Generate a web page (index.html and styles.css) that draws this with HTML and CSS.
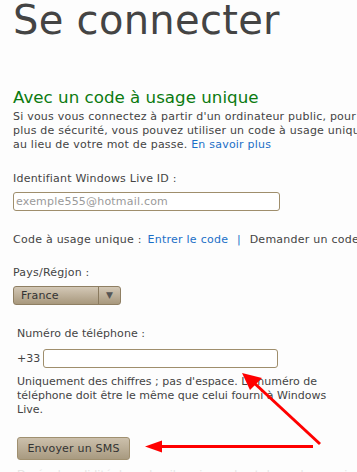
FILE: index.html
```html
<!DOCTYPE html>
<html lang="fr">
<head>
<meta charset="utf-8">
<link rel="stylesheet" href="styles.css">
</head>
<body>
<div class="page">
  <h1 class="title">Se connecter</h1>
  <h2 class="subtitle">Avec un code à usage unique</h2>
  <p class="intro">Si vous vous connectez à partir d'un ordinateur public, pour plus de sécurité, vous pouvez utiliser un code à usage unique au lieu de votre mot de passe. <a class="link" href="#">En savoir plus</a></p>

  <div class="field">
    <label class="label">Identifiant Windows Live ID :</label>
    <input class="text-input id-input" type="text" placeholder="exemple555@hotmail.com">
  </div>

  <p class="code-line">Code à usage unique : <a class="link" href="#">Entrer le code</a> <span class="sep">|</span> Demander un code</p>

  <div class="field">
    <label class="label">Pays/Régjon :</label>
    <div class="select">
      <span class="select-value">France</span>
      <span class="select-arrow">▼</span>
    </div>
  </div>

  <div class="phone-block">
    <label class="label plain">Numéro de téléphone :</label>
    <div class="phone-row">
      <span class="prefix">+33</span>
      <input class="text-input phone-input" type="text">
    </div>
    <p class="hint">Uniquement des chiffres ; pas d'espace. Le numéro de téléphone doit être le même que celui fourni à Windows Live.</p>
    <button class="btn">Envoyer un SMS</button>
    <p class="faint">Durée de validité du code : il expire au bout de quelques minutes.</p>
  </div>
</div>
<svg class="arrows" width="357" height="472" viewBox="0 0 357 472">
  <g stroke="#f00" stroke-width="3" fill="none">
    <line x1="320" y1="444" x2="252" y2="381"/>
    <line x1="313" y1="446.5" x2="158" y2="446.5"/>
  </g>
  <g fill="#f00">
    <polygon points="242,373 262,378 250,390"/>
    <polygon points="145,446.5 162,440.5 162,452.5"/>
  </g>
</svg>
</body>
</html>
```
FILE: styles.css
```css
html, body {
  margin: 0;
  padding: 0;
  background: #fdfdfd;
  overflow: hidden;
}
body {
  width: 357px;
  height: 472px;
  position: relative;
  font-family: "DejaVu Sans", sans-serif;
  color: #444;
}
.page {
  width: 400px;
  padding-left: 13px;
}
.title {
  margin: 0;
  font-size: 40px;
  font-weight: normal;
  letter-spacing: 0.3px;
  color: #444;
  line-height: 41px;
  height: 87px;
}
.subtitle {
  margin: 0;
  font-size: 16.7px;
  font-weight: normal;
  color: #0b7a10;
  line-height: 20px;
}
.intro {
  margin: 3px 0 0;
  font-size: 11px;
  letter-spacing: 0.22px;
  line-height: 14px;
  width: 360px;
}
.link {
  color: #1b6fc7;
  text-decoration: none;
}
.field {
  display: flex;
  flex-direction: column;
  align-items: flex-start;
}
.label {
  font-size: 11px;
  letter-spacing: 0.22px;
  line-height: 14px;
  display: block;
}
.label.plain { letter-spacing: 0.05px; }
.field:first-of-type { margin-top: 20px; }
.text-input {
  box-sizing: border-box;
  height: 19px;
  border: 1px solid #9f8e6c;
  border-radius: 3px;
  background: #fff;
  font-family: "DejaVu Sans", sans-serif;
  font-size: 11px;
  letter-spacing: 0.2px;
  padding: 0 2px;
  outline: none;
}
.text-input::placeholder { color: #9a9a9a; }
.id-input {
  width: 267px;
  margin-top: 6px;
}
.code-line {
  margin: 22px 0 0;
  font-size: 11px;
  letter-spacing: 0.25px;
  line-height: 14px;
  white-space: nowrap;
}
.code-line .link { margin-left: 2px; }
.sep { color: #1b6fc7; padding: 0 5px; }
.code-line + .field { margin-top: 19px; }
.select {
  margin-top: 6px;
  width: 108px;
  height: 19px;
  box-sizing: border-box;
  border: 1px solid #8f7f63;
  border-radius: 3px;
  background: linear-gradient(#d3c8b6, #a8987d);
  display: flex;
  font-size: 11px;
  line-height: 17px;
}
.select-value {
  flex: 1;
  padding-left: 7px;
  color: #333;
  letter-spacing: 0.2px;
}
.select-arrow {
  width: 21px;
  border-left: 1px solid #8a7a5e;
  text-align: center;
  font-size: 9px;
  color: #555;
}
.phone-block {
  padding-left: 4px;
  margin-top: 22px;
}
.phone-row {
  display: flex;
  align-items: center;
  margin-top: 8px;
}
.prefix {
  font-size: 11px;
  margin-right: 3px;
}
.phone-input { width: 235px; }
.hint {
  margin: 7px 0 0;
  font-size: 11px;
  line-height: 14px;
  width: 330px;
}
.btn {
  margin-top: 20px;
  width: 113px;
  height: 23px;
  border: 1px solid #a09070;
  border-radius: 3px;
  background: linear-gradient(#ccc0ac, #a89a80);
  font-family: "DejaVu Sans", sans-serif;
  font-size: 11px;
  letter-spacing: 0.2px;
  color: #333;
  padding: 0;
}
.faint {
  margin: 8px 0 0;
  font-size: 11px;
  color: #e4e4e4;
  white-space: nowrap;
}
.arrows {
  position: absolute;
  left: 0;
  top: 0;
  pointer-events: none;
}
```
